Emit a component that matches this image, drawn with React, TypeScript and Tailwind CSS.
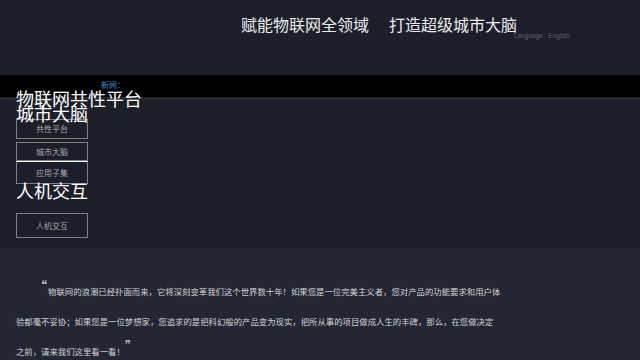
export default function App() {
  const cjk = { fontFamily: '"Noto Sans CJK SC", "Noto Sans", sans-serif' };

  return (
    <div className="w-[640px] h-[360px] overflow-hidden bg-[#1c1f2a]" style={cjk}>
      {/* header */}
      <header className="h-[75px] bg-[#1c1f2a] flex flex-col">
        <h1 className="pl-[241px] pt-[16px] text-[16px] leading-[16px] text-[#ececec] font-normal">
          赋能物联网全领域<span className="ml-[20px]">打造超级城市大脑</span>
        </h1>
        <div
          className="pl-[514px] pt-[1px] text-[6.5px] leading-[6px] text-[#5f626a]"
          style={{ fontFamily: '"Liberation Sans", Arial, sans-serif' }}
        >
          Language : English
        </div>
      </header>

      {/* news bar */}
      <div className="h-[22px] bg-black pl-[101px] pt-[5px]">
        <span className="text-[8px] leading-[10px] text-[#3b8ed3] block">新闻：</span>
      </div>
      <div className="h-[3px] bg-[#23262f]" />

      {/* product menu */}
      <section className="h-[148px] px-4 flex flex-col items-start">
        <div className="-mt-[9px] relative text-[18px] leading-[15px] text-white">
          物联网共性平台
          <br />
          城市大脑
        </div>
        <div className="mt-[-2px] w-[72px] flex flex-col text-[8px] text-[#a9abb0]">
          <div className="h-[20px] border border-[#7e8086] flex items-center justify-center">共性平台</div>
          <div className="mt-[3px] h-[19px] border border-[#7e8086] flex items-center justify-center">城市大脑</div>
          <div className="h-[23px] border border-[#7e8086] border-t-white flex items-center justify-center">应用子集</div>
        </div>
        <div className="-mt-[1px] relative text-[18px] leading-[15px] text-white">人机交互</div>
        <div className="mt-[15px] w-[72px] h-[25px] border border-[#7e8086] flex items-center justify-center text-[8px] text-[#a9abb0]">
          人机交互
        </div>
      </section>

      {/* intro */}
      <section className="h-[112px] bg-[#232733] px-4 pt-[28px]">
        <p className="w-[500px] text-[8.4px] leading-[30px] text-[#d2d3d6] indent-[18px]">
          <span className="text-[13px] leading-[0] align-[4px] mr-[1px] text-[#e0e1e4]">“</span>
          物联网的浪潮已经扑面而来，它将深刻变革我们这个世界数十年！如果您是一位完美主义者，您对产品的功能要求和用户体
          <br />
          验都毫不妥协；如果您是一位梦想家，您追求的是把科幻般的产品变为现实，把所从事的项目做成人生的丰碑，那么，在您做决定
          <br />
          之前，请来我们这里看一看！
          <span className="text-[13px] leading-[0] align-[4px] text-[#e0e1e4]">”</span>
        </p>
      </section>
    </div>
  );
}
